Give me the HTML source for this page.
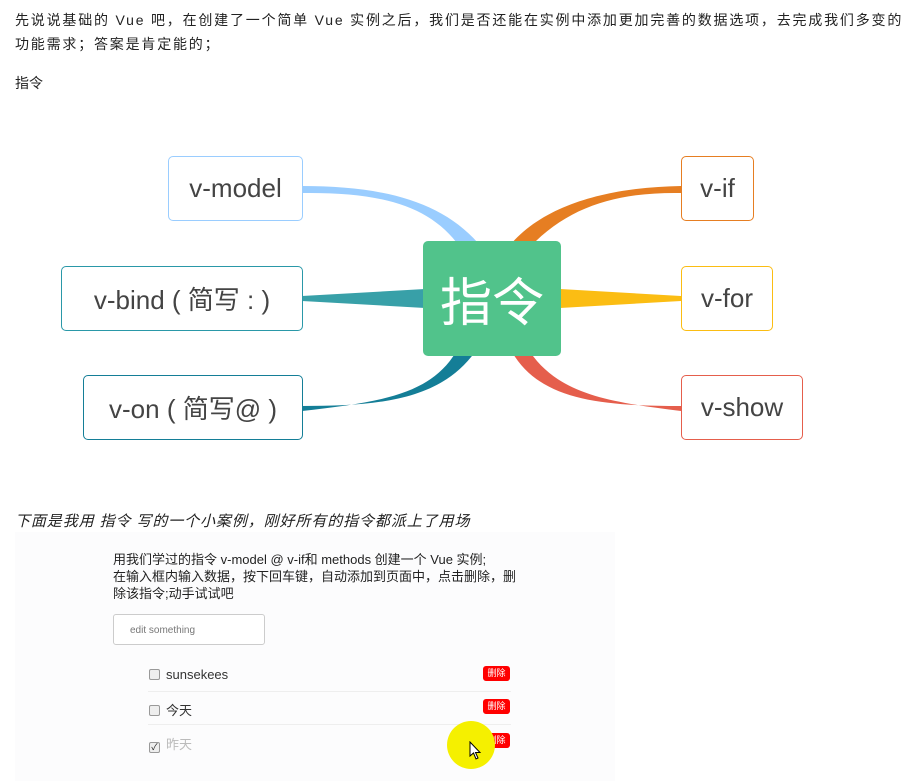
<!DOCTYPE html>
<html><head><meta charset="utf-8"><style>
body{margin:0;width:918px;height:781px;background:#fff;font-family:"Liberation Sans","Noto Sans CJK SC",sans-serif;color:#222;position:relative;overflow:hidden}
.a{position:absolute}
p{margin:0}
.box{position:absolute;border:1px solid;border-radius:5px;background:#fff;font-family:"Liberation Sans","Noto Sans CJK SC",sans-serif;font-size:26px;color:#444;display:flex;align-items:center;justify-content:center;box-sizing:border-box;white-space:nowrap}
.item{position:absolute;left:149px;font-size:13px;color:#333}
.cb{display:inline-block;width:9px;height:9px;border:1px solid #999;border-radius:2px;background:#eee;vertical-align:-1px;margin-right:6px;font-size:9px;line-height:9px;text-align:center;color:#222}
.del{position:absolute;left:483px;width:27px;height:15px;background:#f00;border-radius:3px;color:#fff;font-size:9px;text-align:center;line-height:15px}
.line{position:absolute;left:148px;width:363px;height:1px;background:#eee}
</style></head><body>
<p class="a" style="left:15px;top:8px;font-size:14px;line-height:24px;white-space:nowrap;letter-spacing:1.8px">先说说基础的 Vue 吧，在创建了一个简单 Vue 实例之后，我们是否还能在实例中添加更加完善的数据选项，去完成我们多变的<br>功能需求；答案是肯定能的；</p>
<p class="a" style="left:15px;top:73px;font-size:14px">指令</p>

<svg class="a" style="left:0;top:0" width="918" height="500">
<path d="M302 186 C380 186 440 200 478 243 L460 247 C430 205 380 192 302 193Z" fill="#9acdff"/>
<path d="M681 186 C620 187 550 200 512 243 L530 247 C570 205 620 192 681 193Z" fill="#e67e22"/>
<path d="M302 296 L425 289 L425 308 L302 301Z" fill="#38a0a8"/>
<path d="M681 296 L560 289 L560 308 L681 301Z" fill="#fbbd13"/>
<path d="M302 406 C380 406 440 400 475 352 L456 352 C430 395 380 402 302 411Z" fill="#147e97"/>
<path d="M681 406 C600 406 540 400 512 352 L530 352 C560 395 610 402 681 411Z" fill="#e55e4c"/>
</svg>
<div class="box" style="left:168px;top:156px;width:135px;height:65px;border-color:#9acdff">v-model</div>
<div class="box" style="left:61px;top:266px;width:242px;height:65px;border-color:#2a98a8">v-bind ( 简写 : )</div>
<div class="box" style="left:83px;top:375px;width:220px;height:65px;border-color:#147e97">v-on ( 简写@ )</div>
<div class="box" style="left:681px;top:156px;width:73px;height:65px;border-color:#e67e22">v-if</div>
<div class="box" style="left:681px;top:266px;width:92px;height:65px;border-color:#fbbd13">v-for</div>
<div class="box" style="left:681px;top:375px;width:122px;height:65px;border-color:#e55e4c">v-show</div>
<div class="box" style="left:423px;top:241px;width:138px;height:115px;background:#51c38b;border-color:#51c38b;color:#fff;font-size:52px">指令</div>

<p class="a" style="left:15px;top:510px;font-size:15px;letter-spacing:0.9px;font-style:italic">下面是我用 指令 写的一个小案例，刚好所有的指令都派上了用场</p>
<div class="a" style="left:15px;top:532px;width:600px;height:249px;background:#fcfcfd"></div>
<p class="a" style="left:113px;top:551px;font-size:13px;line-height:17px;color:#222;white-space:nowrap">用我们学过的指令 v-model @ v-if和 methods 创建一个 Vue 实例;<br>在输入框内输入数据，按下回车键，自动添加到页面中，点击删除，删<br>除该指令;动手试试吧</p>
<div class="a" style="left:113px;top:614px;width:152px;height:31px;border:1px solid #ccc;border-radius:3px;background:#fff;font-size:10px;color:#777;line-height:31px;padding-left:16px;box-sizing:border-box">edit something</div>
<div class="item" style="top:667px"><span class="cb"></span>sunsekees</div>
<div class="del" style="top:666px">删除</div>
<div class="line" style="top:691px"></div>
<div class="item" style="top:700px"><span class="cb"></span>今天</div>
<div class="del" style="top:699px">删除</div>
<div class="line" style="top:724px"></div>
<div class="item" style="top:734px;color:#bbb"><span class="cb">✓</span>昨天</div>
<div class="del" style="top:733px">删除</div>
<div class="a" style="left:447px;top:721px;width:48px;height:48px;border-radius:50%;background:#f5f000"></div>
<svg class="a" style="left:469px;top:741px" width="14" height="20"><path d="M1 1 L1 15 L4.5 12 L7 18 L9 17 L6.5 11.5 L11 11.5Z" fill="#fff" stroke="#000" stroke-width="1"/></svg>
</body></html>
